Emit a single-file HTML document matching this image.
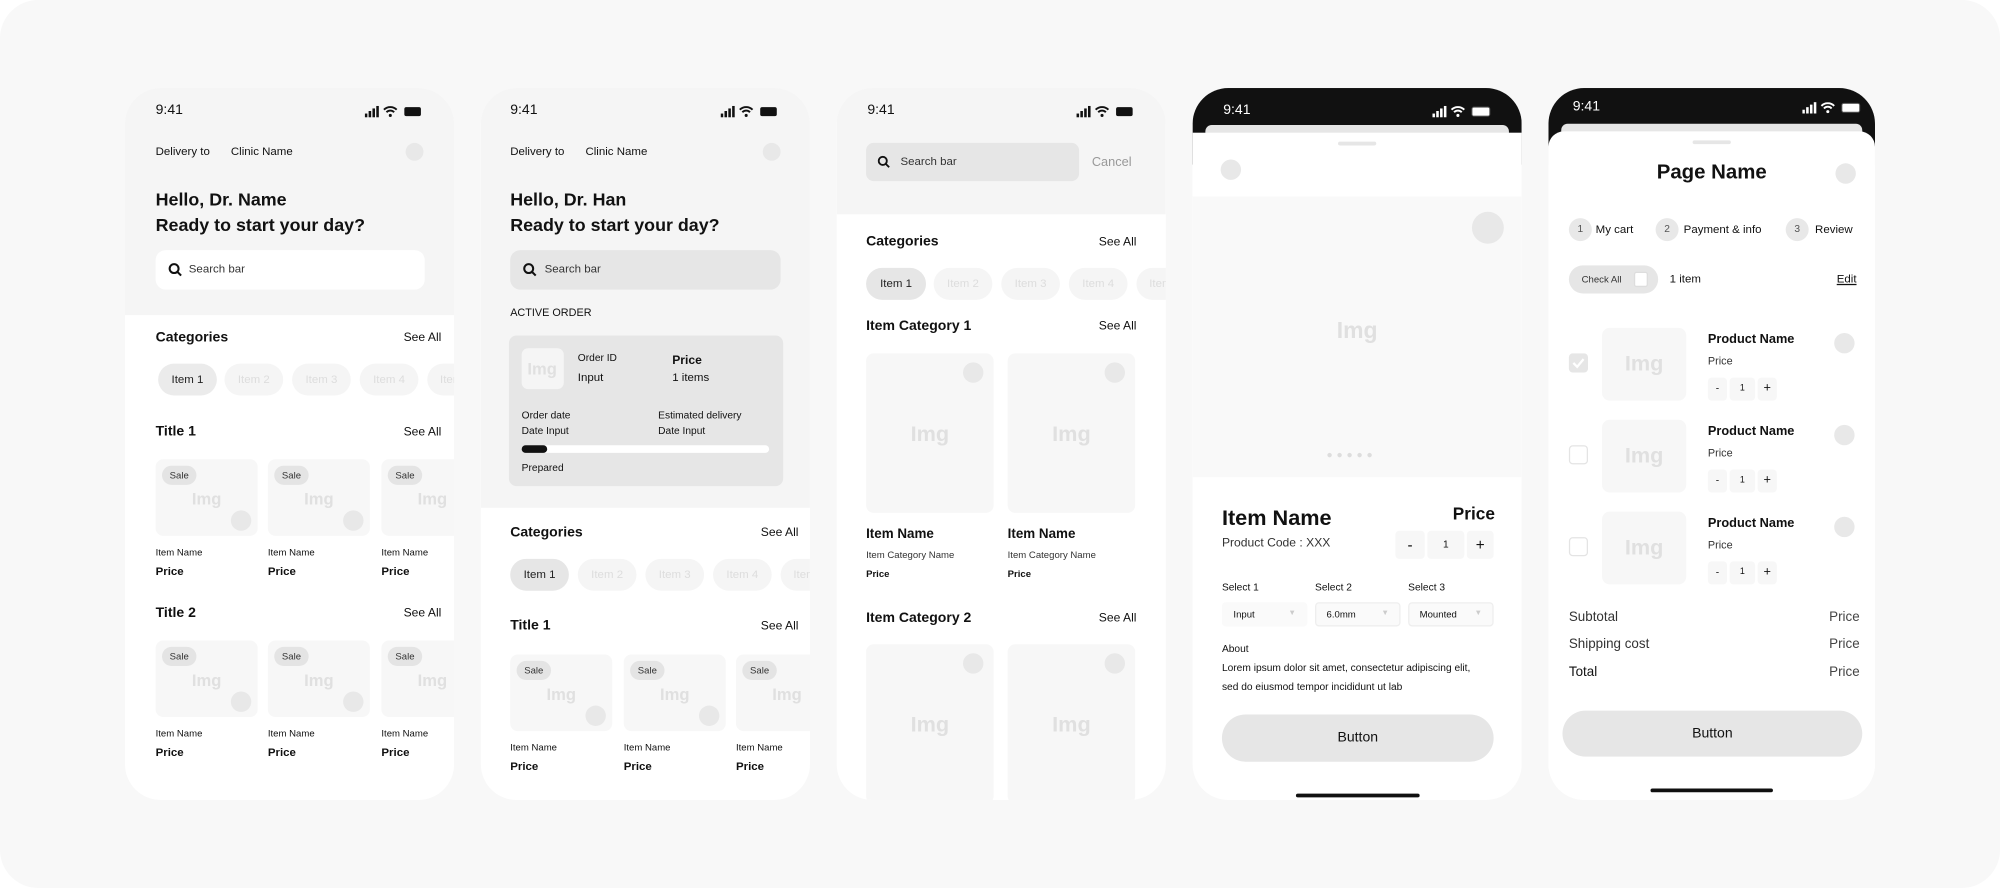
<!DOCTYPE html>
<html><head><meta charset="utf-8">
<style>
*{margin:0;padding:0;box-sizing:border-box}
html,body{width:2000px;height:888px;overflow:hidden;background:#fff;font-family:"Liberation Sans",sans-serif;color:#111}
#w{position:absolute;left:0;top:0;width:1568px;height:696px;transform:scale(1.27551,1.27586);transform-origin:0 0;background:#f8f8f8;border-radius:30px;overflow:hidden}
.a{position:absolute}
.t{position:absolute;transform:translateY(-50%);white-space:nowrap;line-height:1}
.ph{position:absolute;top:69px;width:258px;height:558px;border-radius:28px;overflow:hidden;background:#fff}
.c{position:absolute;border-radius:50%;background:#e8e8e8}
.b{font-weight:bold}
.chip{position:absolute;height:25px;border-radius:13px;background:#f5f5f5;color:#ddd;font-size:9px;line-height:25px;text-align:center}
.card{position:absolute;background:#f7f7f7;border-radius:6px}
.sale{position:absolute;left:5px;top:5px;background:#e4e4e4;border-radius:8px;font-size:7.5px;padding:3px 6px;color:#333}
.img{position:absolute;color:#e0e0e0;font-weight:bold;transform:translate(-50%,-50%);line-height:1}
.step{position:absolute;width:18px;height:18px;border-radius:9px;background:#e8e8e8;font-size:8px;text-align:center;line-height:18px;color:#555}
.box{position:absolute;background:#f7f7f7;border-radius:3px;font-size:8px;text-align:center}
.sel{position:absolute;height:19px;width:67px;border:1px solid #eee;background:#fafafa;border-radius:3px;font-size:7.5px;line-height:17px;padding-left:8px}
.sel i{position:absolute;right:8px;top:0;color:#ccc;font-style:normal;font-size:6px}
.cb{position:absolute;width:15px;height:15px;border:1.5px solid #e4e4e4;border-radius:3px;background:#fff}
</style></head><body><div id="w">

<!-- PHONE 1 -->
<div class="ph" style="left:98px">
 <div class="a" style="left:0;top:0;width:258px;height:178px;background:#f5f5f5"></div>
 <div class="t" style="left:24px;top:18px;font-size:11px">9:41</div>
 <svg class="a" style="left:188px;top:14px" width="46" height="9" viewBox="0 0 46 9"><rect x="0" y="6" width="2" height="3" fill="#111"/><rect x="3" y="4" width="2" height="5" fill="#111"/><rect x="6" y="2" width="2" height="7" fill="#111"/><rect x="9" y="0" width="2" height="9" fill="#111"/><path d="M15 3a7 7 0 0 1 10 0M17 5a4 4 0 0 1 6 0" stroke="#111" stroke-width="1.5" fill="none"/><circle cx="20" cy="7.5" r="1.2" fill="#111"/><rect x="31" y="1" width="13" height="7" rx="1.5" fill="#111"/></svg>
 <div class="t" style="left:24px;top:50px;font-size:9px">Delivery to</div>
 <div class="t" style="left:83px;top:50px;font-size:9px">Clinic Name</div>
 <div class="c" style="left:220px;top:43px;width:14px;height:14px"></div>
 <div class="t b" style="left:24px;top:87px;font-size:14px">Hello, Dr. Name</div>
 <div class="t b" style="left:24px;top:107px;font-size:14px">Ready to start your day?</div>
 <div class="a" style="left:24px;top:127px;width:211px;height:31px;background:#fff;border-radius:8px"></div>
 <svg class="a" style="left:34px;top:137px" width="11" height="11" viewBox="0 0 11 11"><circle cx="4.5" cy="4.5" r="3.5" stroke="#111" stroke-width="1.6" fill="none"/><path d="M7 7l3 3" stroke="#111" stroke-width="1.6"/></svg>
 <div class="t" style="left:50px;top:142px;font-size:9px;color:#333">Search bar</div>
 <div class="t b" style="left:24px;top:196px;font-size:11px">Categories</div>
 <div class="t" style="right:10px;top:196px;font-size:9.5px">See All</div>
 <div class="chip" style="left:26px;top:216px;width:46px;background:#ebebeb;color:#222">Item 1</div>
 <div class="chip" style="left:78px;top:216px;width:46px">Item 2</div>
 <div class="chip" style="left:131px;top:216px;width:46px">Item 3</div>
 <div class="chip" style="left:184px;top:216px;width:46px">Item 4</div>
 <div class="chip" style="left:237px;top:216px;width:46px;text-align:left;padding-left:10px">Item 5</div>
 <div class="t b" style="left:24px;top:270px;font-size:11px">Title 1</div>
 <div class="t" style="right:10px;top:270px;font-size:9.5px">See All</div>
 <div class="card" style="left:24px;top:291px;width:80px;height:60px"><div class="sale">Sale</div><div class="img" style="left:40px;top:31px;font-size:13px">Img</div><div class="c" style="left:59px;top:40px;width:16px;height:16px"></div></div>
 <div class="card" style="left:112px;top:291px;width:80px;height:60px"><div class="sale">Sale</div><div class="img" style="left:40px;top:31px;font-size:13px">Img</div><div class="c" style="left:59px;top:40px;width:16px;height:16px"></div></div>
 <div class="card" style="left:201px;top:291px;width:80px;height:60px"><div class="sale">Sale</div><div class="img" style="left:40px;top:31px;font-size:13px">Img</div><div class="c" style="left:59px;top:40px;width:16px;height:16px"></div></div>
 <div class="t" style="left:24px;top:364px;font-size:7.5px">Item Name</div><div class="t b" style="left:24px;top:379px;font-size:9px">Price</div>
 <div class="t" style="left:112px;top:364px;font-size:7.5px">Item Name</div><div class="t b" style="left:112px;top:379px;font-size:9px">Price</div>
 <div class="t" style="left:201px;top:364px;font-size:7.5px">Item Name</div><div class="t b" style="left:201px;top:379px;font-size:9px">Price</div>
 <div class="t b" style="left:24px;top:412px;font-size:11px">Title 2</div>
 <div class="t" style="right:10px;top:412px;font-size:9.5px">See All</div>
 <div class="card" style="left:24px;top:433px;width:80px;height:60px"><div class="sale">Sale</div><div class="img" style="left:40px;top:31px;font-size:13px">Img</div><div class="c" style="left:59px;top:40px;width:16px;height:16px"></div></div>
 <div class="card" style="left:112px;top:433px;width:80px;height:60px"><div class="sale">Sale</div><div class="img" style="left:40px;top:31px;font-size:13px">Img</div><div class="c" style="left:59px;top:40px;width:16px;height:16px"></div></div>
 <div class="card" style="left:201px;top:433px;width:80px;height:60px"><div class="sale">Sale</div><div class="img" style="left:40px;top:31px;font-size:13px">Img</div><div class="c" style="left:59px;top:40px;width:16px;height:16px"></div></div>
 <div class="t" style="left:24px;top:506px;font-size:7.5px">Item Name</div><div class="t b" style="left:24px;top:521px;font-size:9px">Price</div>
 <div class="t" style="left:112px;top:506px;font-size:7.5px">Item Name</div><div class="t b" style="left:112px;top:521px;font-size:9px">Price</div>
 <div class="t" style="left:201px;top:506px;font-size:7.5px">Item Name</div><div class="t b" style="left:201px;top:521px;font-size:9px">Price</div>
</div>

<!-- PHONE 2 -->
<div class="ph" style="left:377px">
 <div class="a" style="left:0;top:0;width:258px;height:329px;background:#f5f5f5"></div>
 <div class="t" style="left:23px;top:18px;font-size:11px">9:41</div>
 <svg class="a" style="left:188px;top:14px" width="46" height="9" viewBox="0 0 46 9"><rect x="0" y="6" width="2" height="3" fill="#111"/><rect x="3" y="4" width="2" height="5" fill="#111"/><rect x="6" y="2" width="2" height="7" fill="#111"/><rect x="9" y="0" width="2" height="9" fill="#111"/><path d="M15 3a7 7 0 0 1 10 0M17 5a4 4 0 0 1 6 0" stroke="#111" stroke-width="1.5" fill="none"/><circle cx="20" cy="7.5" r="1.2" fill="#111"/><rect x="31" y="1" width="13" height="7" rx="1.5" fill="#111"/></svg>
 <div class="t" style="left:23px;top:50px;font-size:9px">Delivery to</div>
 <div class="t" style="left:82px;top:50px;font-size:9px">Clinic Name</div>
 <div class="c" style="left:221px;top:43px;width:14px;height:14px"></div>
 <div class="t b" style="left:23px;top:87px;font-size:14px">Hello, Dr. Han</div>
 <div class="t b" style="left:23px;top:107px;font-size:14px">Ready to start your day?</div>
 <div class="a" style="left:23px;top:127px;width:212px;height:31px;background:#e6e6e6;border-radius:8px"></div>
 <svg class="a" style="left:33px;top:137px" width="11" height="11" viewBox="0 0 11 11"><circle cx="4.5" cy="4.5" r="3.5" stroke="#111" stroke-width="1.6" fill="none"/><path d="M7 7l3 3" stroke="#111" stroke-width="1.6"/></svg>
 <div class="t" style="left:50px;top:142px;font-size:9px;color:#333">Search bar</div>
 <div class="t" style="left:23px;top:176px;font-size:8.5px">ACTIVE ORDER</div>
 <div class="a" style="left:22px;top:194px;width:215px;height:118px;background:#e6e6e6;border-radius:6px"></div>
 <div class="a" style="left:32px;top:204px;width:33px;height:32px;background:#f5f5f5;border-radius:5px"></div>
 <div class="img" style="left:48px;top:220px;font-size:13px">Img</div>
 <div class="t" style="left:76px;top:212px;font-size:8px">Order ID</div>
 <div class="t" style="left:76px;top:227px;font-size:9px">Input</div>
 <div class="t b" style="left:150px;top:214px;font-size:9.5px">Price</div>
 <div class="t" style="left:150px;top:227px;font-size:9px">1 items</div>
 <div class="t" style="left:32px;top:257px;font-size:8px">Order date</div>
 <div class="t" style="left:32px;top:269px;font-size:8px">Date Input</div>
 <div class="t" style="left:139px;top:257px;font-size:8px">Estimated delivery</div>
 <div class="t" style="left:139px;top:269px;font-size:8px">Date Input</div>
 <div class="a" style="left:32px;top:280px;width:194px;height:6px;background:#fff;border-radius:3px"></div>
 <div class="a" style="left:32px;top:280px;width:20px;height:6px;background:#111;border-radius:3px"></div>
 <div class="t" style="left:32px;top:298px;font-size:8px">Prepared</div>
 <div class="t b" style="left:23px;top:349px;font-size:11px">Categories</div>
 <div class="t" style="right:9px;top:349px;font-size:9.5px">See All</div>
 <div class="chip" style="left:23px;top:369px;width:46px;background:#e6e6e6;color:#222">Item 1</div>
 <div class="chip" style="left:76px;top:369px;width:46px">Item 2</div>
 <div class="chip" style="left:129px;top:369px;width:46px">Item 3</div>
 <div class="chip" style="left:182px;top:369px;width:46px">Item 4</div>
 <div class="chip" style="left:235px;top:369px;width:46px;text-align:left;padding-left:10px">Item 5</div>
 <div class="t b" style="left:23px;top:422px;font-size:11px">Title 1</div>
 <div class="t" style="right:9px;top:422px;font-size:9.5px">See All</div>
 <div class="card" style="left:23px;top:444px;width:80px;height:60px"><div class="sale">Sale</div><div class="img" style="left:40px;top:31px;font-size:13px">Img</div><div class="c" style="left:59px;top:40px;width:16px;height:16px"></div></div>
 <div class="card" style="left:112px;top:444px;width:80px;height:60px"><div class="sale">Sale</div><div class="img" style="left:40px;top:31px;font-size:13px">Img</div><div class="c" style="left:59px;top:40px;width:16px;height:16px"></div></div>
 <div class="card" style="left:200px;top:444px;width:80px;height:60px"><div class="sale">Sale</div><div class="img" style="left:40px;top:31px;font-size:13px">Img</div><div class="c" style="left:59px;top:40px;width:16px;height:16px"></div></div>
 <div class="t" style="left:23px;top:517px;font-size:7.5px">Item Name</div><div class="t b" style="left:23px;top:532px;font-size:9px">Price</div>
 <div class="t" style="left:112px;top:517px;font-size:7.5px">Item Name</div><div class="t b" style="left:112px;top:532px;font-size:9px">Price</div>
 <div class="t" style="left:200px;top:517px;font-size:7.5px">Item Name</div><div class="t b" style="left:200px;top:532px;font-size:9px">Price</div>
</div>

<!-- PHONE 3 -->
<div class="ph" style="left:656px">
 <div class="a" style="left:0;top:0;width:258px;height:99px;background:#f5f5f5"></div>
 <div class="t" style="left:24px;top:18px;font-size:11px">9:41</div>
 <svg class="a" style="left:188px;top:14px" width="46" height="9" viewBox="0 0 46 9"><rect x="0" y="6" width="2" height="3" fill="#111"/><rect x="3" y="4" width="2" height="5" fill="#111"/><rect x="6" y="2" width="2" height="7" fill="#111"/><rect x="9" y="0" width="2" height="9" fill="#111"/><path d="M15 3a7 7 0 0 1 10 0M17 5a4 4 0 0 1 6 0" stroke="#111" stroke-width="1.5" fill="none"/><circle cx="20" cy="7.5" r="1.2" fill="#111"/><rect x="31" y="1" width="13" height="7" rx="1.5" fill="#111"/></svg>
 <div class="a" style="left:23px;top:43px;width:167px;height:30px;background:#e6e6e6;border-radius:6px"></div>
 <svg class="a" style="left:32px;top:53px" width="10" height="10" viewBox="0 0 11 11"><circle cx="4.5" cy="4.5" r="3.5" stroke="#111" stroke-width="1.6" fill="none"/><path d="M7 7l3 3" stroke="#111" stroke-width="1.6"/></svg>
 <div class="t" style="left:50px;top:58px;font-size:9px;color:#333">Search bar</div>
 <div class="t" style="left:200px;top:59px;font-size:10px;color:#999">Cancel</div>
 <div class="t b" style="left:23px;top:121px;font-size:11px">Categories</div>
 <div class="t" style="right:23px;top:121px;font-size:9.5px">See All</div>
 <div class="chip" style="left:23px;top:141px;width:47px;background:#e6e6e6;color:#222">Item 1</div>
 <div class="chip" style="left:76px;top:141px;width:46px">Item 2</div>
 <div class="chip" style="left:129px;top:141px;width:46px">Item 3</div>
 <div class="chip" style="left:182px;top:141px;width:46px">Item 4</div>
 <div class="chip" style="left:235px;top:141px;width:46px;text-align:left;padding-left:10px">Item 5</div>
 <div class="t b" style="left:23px;top:187px;font-size:11px">Item Category 1</div>
 <div class="t" style="right:23px;top:187px;font-size:9.5px">See All</div>
 <div class="card" style="left:23px;top:208px;width:100px;height:125px"><div class="img" style="left:50px;top:63px;font-size:17px">Img</div><div class="c" style="left:76px;top:7px;width:16px;height:16px"></div></div>
 <div class="card" style="left:134px;top:208px;width:100px;height:125px"><div class="img" style="left:50px;top:63px;font-size:17px">Img</div><div class="c" style="left:76px;top:7px;width:16px;height:16px"></div></div>
 <div class="t b" style="left:23px;top:350px;font-size:10.5px">Item Name</div>
 <div class="t" style="left:23px;top:366px;font-size:7.5px;color:#333">Item Category Name</div>
 <div class="t b" style="left:23px;top:381px;font-size:7.5px">Price</div>
 <div class="t b" style="left:134px;top:350px;font-size:10.5px">Item Name</div>
 <div class="t" style="left:134px;top:366px;font-size:7.5px;color:#333">Item Category Name</div>
 <div class="t b" style="left:134px;top:381px;font-size:7.5px">Price</div>
 <div class="t b" style="left:23px;top:416px;font-size:11px">Item Category 2</div>
 <div class="t" style="right:23px;top:416px;font-size:9.5px">See All</div>
 <div class="card" style="left:23px;top:436px;width:100px;height:125px"><div class="img" style="left:50px;top:63px;font-size:17px">Img</div><div class="c" style="left:76px;top:7px;width:16px;height:16px"></div></div>
 <div class="card" style="left:134px;top:436px;width:100px;height:125px"><div class="img" style="left:50px;top:63px;font-size:17px">Img</div><div class="c" style="left:76px;top:7px;width:16px;height:16px"></div></div>
</div>

<!-- PHONE 4 -->
<div class="ph" style="left:935px">
 <div class="a" style="left:0;top:0;width:258px;height:60px;background:#111"></div>
 <div class="t" style="left:24px;top:18px;font-size:11px;color:#fff">9:41</div>
 <svg class="a" style="left:188px;top:14px" width="46" height="9" viewBox="0 0 46 9"><rect x="0" y="6" width="2" height="3" fill="#fff"/><rect x="3" y="4" width="2" height="5" fill="#fff"/><rect x="6" y="2" width="2" height="7" fill="#fff"/><rect x="9" y="0" width="2" height="9" fill="#fff"/><path d="M15 3a7 7 0 0 1 10 0M17 5a4 4 0 0 1 6 0" stroke="#fff" stroke-width="1.5" fill="none"/><circle cx="20" cy="7.5" r="1.2" fill="#fff"/><rect x="31" y="1" width="14" height="7" rx="1.5" fill="#fff" stroke="#555" stroke-width="0.8"/></svg>
 <div class="a" style="left:10px;top:29px;width:238px;height:10px;background:#e6e6e6;border-radius:5px 5px 0 0"></div>
 <div class="a" style="left:0;top:35px;width:258px;height:50px;background:#fff"></div>
 <div class="a" style="left:114px;top:42px;width:30px;height:3px;background:#e6e6e6;border-radius:2px"></div>
 <div class="c" style="left:22px;top:56px;width:16px;height:16px"></div>
 <div class="a" style="left:0;top:85px;width:258px;height:220px;background:#f9f9f9"></div>
 <div class="c" style="left:219px;top:97px;width:25px;height:25px"></div>
 <div class="img" style="left:129px;top:190px;font-size:18px">Img</div>
 <div class="t" style="left:105px;top:288px;font-size:8px;color:#ddd;letter-spacing:3px">●●●●●</div>
 <div class="t b" style="left:23px;top:337px;font-size:17px">Item Name</div>
 <div class="t b" style="right:21px;top:334px;font-size:13.5px">Price</div>
 <div class="t" style="left:23px;top:357px;font-size:9.5px;color:#333">Product Code : XXX</div>
 <div class="box" style="left:159px;top:347px;width:23px;height:22px;line-height:22px;font-size:12px">-</div>
 <div class="box" style="left:184px;top:347px;width:29px;height:22px;line-height:22px">1</div>
 <div class="box" style="left:215px;top:347px;width:21px;height:22px;line-height:22px;font-size:12px">+</div>
 <div class="t" style="left:23px;top:392px;font-size:8px">Select 1</div>
 <div class="t" style="left:96px;top:392px;font-size:8px">Select 2</div>
 <div class="t" style="left:169px;top:392px;font-size:8px">Select 3</div>
 <div class="sel" style="left:23px;top:403px;border-color:#fafafa">Input<i>▼</i></div>
 <div class="sel" style="left:96px;top:403px">6.0mm<i>▼</i></div>
 <div class="sel" style="left:169px;top:403px">Mounted<i>▼</i></div>
 <div class="t" style="left:23px;top:440px;font-size:8px">About</div>
 <div class="t" style="left:23px;top:455px;font-size:8px">Lorem ipsum dolor sit amet, consectetur adipiscing elit,</div>
 <div class="t" style="left:23px;top:470px;font-size:8px">sed do eiusmod tempor incididunt ut lab</div>
 <div class="a" style="left:23px;top:491px;width:213px;height:37px;background:#e6e6e6;border-radius:19px;font-size:11px;text-align:center;line-height:37px">Button</div>
 <div class="a" style="left:81px;top:553px;width:97px;height:3px;background:#111;border-radius:2px"></div>
</div>

<!-- PHONE 5 -->
<div class="ph" style="left:1214px;width:256px">
 <div class="a" style="left:0;top:0;width:256px;height:60px;background:#111"></div>
 <div class="t" style="left:19px;top:15px;font-size:11px;color:#fff">9:41</div>
 <svg class="a" style="left:199px;top:11px" width="46" height="9" viewBox="0 0 46 9"><rect x="0" y="6" width="2" height="3" fill="#fff"/><rect x="3" y="4" width="2" height="5" fill="#fff"/><rect x="6" y="2" width="2" height="7" fill="#fff"/><rect x="9" y="0" width="2" height="9" fill="#fff"/><path d="M15 3a7 7 0 0 1 10 0M17 5a4 4 0 0 1 6 0" stroke="#fff" stroke-width="1.5" fill="none"/><circle cx="20" cy="7.5" r="1.2" fill="#fff"/><rect x="31" y="1" width="14" height="7" rx="1.5" fill="#fff" stroke="#555" stroke-width="0.8"/></svg>
 <div class="a" style="left:10px;top:28px;width:236px;height:10px;background:#e6e6e6;border-radius:5px 5px 0 0"></div>
 <div class="a" style="left:0;top:34px;width:256px;height:524px;background:#fff;border-radius:12px 12px 0 0"></div>
 <div class="a" style="left:113px;top:41px;width:30px;height:3px;background:#e6e6e6;border-radius:2px"></div>
 <div class="t b" style="left:128px;top:67px;font-size:16px;transform:translate(-50%,-50%)">Page Name</div>
 <div class="c" style="left:225px;top:59px;width:16px;height:16px"></div>
 <div class="step" style="left:16px;top:102px">1</div><div class="t" style="left:37px;top:111px;font-size:9px">My cart</div>
 <div class="step" style="left:84px;top:102px">2</div><div class="t" style="left:106px;top:111px;font-size:9px">Payment &amp; info</div>
 <div class="step" style="left:186px;top:102px">3</div><div class="t" style="left:209px;top:111px;font-size:9px">Review</div>
 <div class="a" style="left:16px;top:139px;width:70px;height:22px;background:#e6e6e6;border-radius:11px"></div>
 <div class="t" style="left:26px;top:150px;font-size:7.5px;color:#333">Check All</div>
 <div class="a" style="left:67px;top:144px;width:11px;height:12px;background:#fff;border:1px solid #ddd;border-radius:2px"></div>
 <div class="t" style="left:95px;top:150px;font-size:9px">1 item</div>
 <div class="t" style="left:226px;top:150px;font-size:9px;text-decoration:underline">Edit</div>

 <div class="a" style="left:16px;top:208px;width:15px;height:15px;background:#e6e6e6;border-radius:3px"></div>
 <svg class="a" style="left:18px;top:211px" width="11" height="9" viewBox="0 0 11 9"><path d="M1.5 4.5l3 3 5-6" stroke="#fff" stroke-width="1.8" fill="none"/></svg>
 <div class="card" style="left:42px;top:188px;width:66px;height:57px"><div class="img" style="left:33px;top:28px;font-size:17px">Img</div></div>
 <div class="t b" style="left:125px;top:198px;font-size:10px">Product Name</div>
 <div class="t" style="left:125px;top:214px;font-size:8.5px;color:#333">Price</div>
 <div class="box" style="left:125px;top:227px;width:15px;height:18px;line-height:18px">-</div><div class="box" style="left:142px;top:227px;width:20px;height:18px;line-height:18px;font-size:7px">1</div><div class="box" style="left:164px;top:227px;width:15px;height:18px;line-height:18px;font-size:10px">+</div>
 <div class="c" style="left:224px;top:192px;width:16px;height:16px"></div>

 <div class="cb" style="left:16px;top:280px"></div>
 <div class="card" style="left:42px;top:260px;width:66px;height:57px"><div class="img" style="left:33px;top:28px;font-size:17px">Img</div></div>
 <div class="t b" style="left:125px;top:270px;font-size:10px">Product Name</div>
 <div class="t" style="left:125px;top:286px;font-size:8.5px;color:#333">Price</div>
 <div class="box" style="left:125px;top:299px;width:15px;height:18px;line-height:18px">-</div><div class="box" style="left:142px;top:299px;width:20px;height:18px;line-height:18px;font-size:7px">1</div><div class="box" style="left:164px;top:299px;width:15px;height:18px;line-height:18px;font-size:10px">+</div>
 <div class="c" style="left:224px;top:264px;width:16px;height:16px"></div>

 <div class="cb" style="left:16px;top:352px"></div>
 <div class="card" style="left:42px;top:332px;width:66px;height:57px"><div class="img" style="left:33px;top:28px;font-size:17px">Img</div></div>
 <div class="t b" style="left:125px;top:342px;font-size:10px">Product Name</div>
 <div class="t" style="left:125px;top:358px;font-size:8.5px;color:#333">Price</div>
 <div class="box" style="left:125px;top:371px;width:15px;height:18px;line-height:18px">-</div><div class="box" style="left:142px;top:371px;width:20px;height:18px;line-height:18px;font-size:7px">1</div><div class="box" style="left:164px;top:371px;width:15px;height:18px;line-height:18px;font-size:10px">+</div>
 <div class="c" style="left:224px;top:336px;width:16px;height:16px"></div>

 <div class="t" style="left:16px;top:415px;font-size:10.5px;color:#333">Subtotal</div><div class="t" style="right:12px;top:415px;font-size:10.5px;color:#444">Price</div>
 <div class="t" style="left:16px;top:436px;font-size:10.5px;color:#333">Shipping cost</div><div class="t" style="right:12px;top:436px;font-size:10.5px;color:#444">Price</div>
 <div class="t" style="left:16px;top:458px;font-size:10.5px">Total</div><div class="t" style="right:12px;top:458px;font-size:10.5px;color:#444">Price</div>
 <div class="a" style="left:11px;top:488px;width:235px;height:36px;background:#e6e6e6;border-radius:18px;font-size:11px;text-align:center;line-height:36px">Button</div>
 <div class="a" style="left:80px;top:549px;width:96px;height:3px;background:#111;border-radius:2px"></div>
</div>

</div></body></html>
